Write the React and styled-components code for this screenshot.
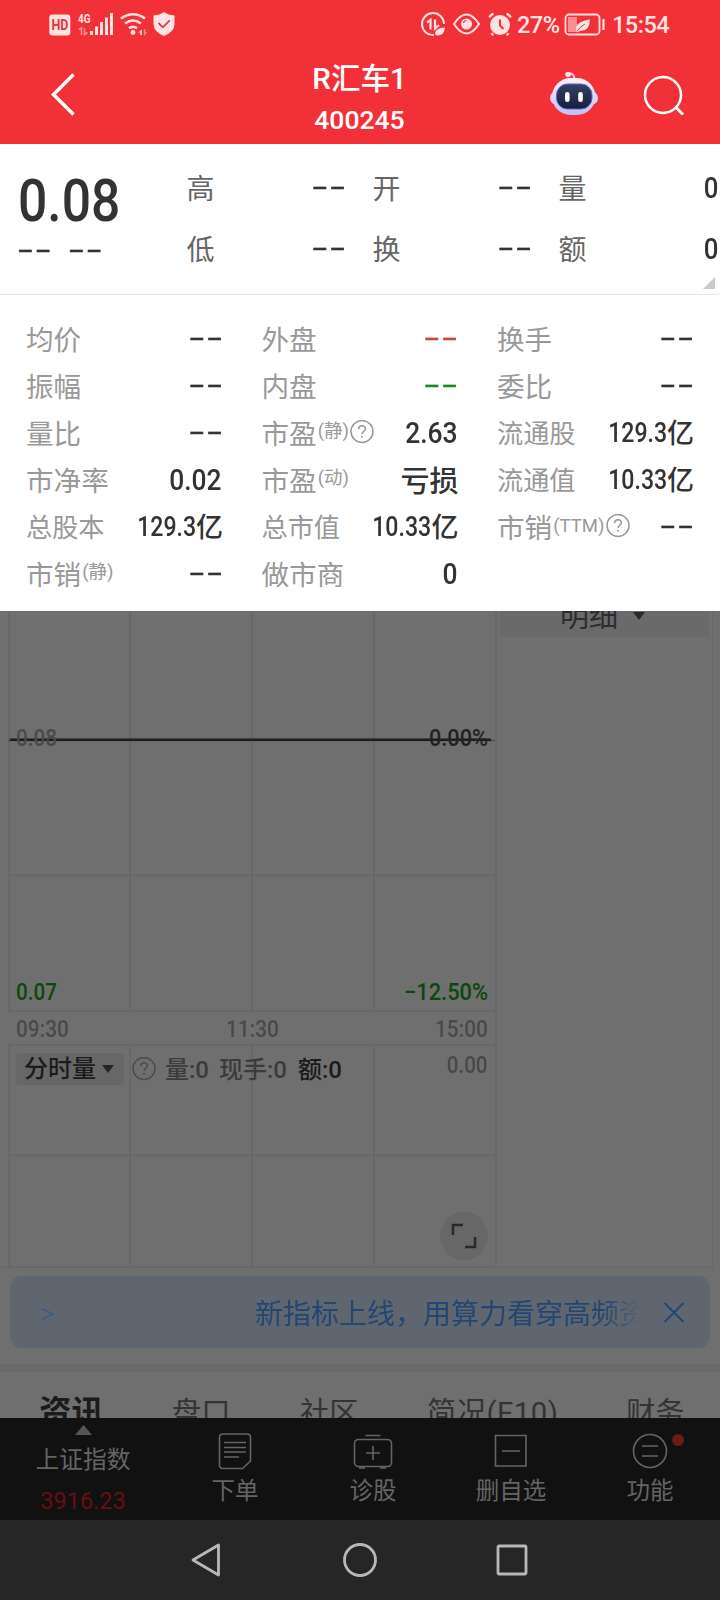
import React from "react";
import styled, { createGlobalStyle } from "styled-components";

const GlobalStyle = createGlobalStyle`
	* {
		box-sizing: border-box;
	}
	body {
		margin: 0;
		background: #6f6f6f;
		font-family: Roboto, "Noto Sans CJK SC", sans-serif;
	}
	svg {
		display: block;
		flex: none;
	}
`;

const Screen = styled.div`
	width: 720px;
	height: 1600px;
	overflow: hidden;
	display: flex;
	flex-direction: column;
	background: #6f6f6f;
`;

const Header = styled.header`
	height: 144px;
	flex: none;
	background: #f23038;
	color: #fff;
`;

const StatusBar = styled.div`
	height: 48px;
	display: flex;
	justify-content: space-between;
	padding: 0 50px 0 49px;
`;

const StatusGroup = styled.div`
	display: flex;
	align-items: center;
	color: #ffe3e3;
`;

const StatusText = styled.span`
	font-size: 23.5px;
	line-height: 48px;
	font-weight: 500;
	width: ${props => props.$width}px;
	margin: 2px 0 0 ${props => props.$gap}px;
	white-space: nowrap;
	letter-spacing: -0.5px;
`;

const TitleBar = styled.div`
	height: 96px;
	display: grid;
	grid-template-columns: 200px 1fr 200px;
`;

const TitleLeft = styled.div`
	padding: 24px 0 0 50px;
`;

const TitleRight = styled.div`
	display: flex;
	padding: 22px 0 0 28px;
	gap: 42px;
`;

const StockTitle = styled.div`
	text-align: center;
	font-weight: 500;
	font-size: 29.5px;
	line-height: 40px;
	padding-top: 11px;
	padding-right: 1px;
`;

const StockCode = styled.div`
	font-size: 26.5px;
	line-height: 42px;
`;

const Summary = styled.section`
	height: 151px;
	flex: none;
	background: #fff;
	border-bottom: 1px solid #e8e8e8;
	display: flex;
	position: relative;
`;

const PriceBox = styled.div`
	width: 187px;
	flex: none;
	padding: 20px 0 0 18px;
`;

const Num = styled.span`
	display: inline-block;
	white-space: nowrap;
	font-size: ${props => props.$size || 29}px;
	font-weight: ${props => props.$weight || 500};
	color: ${props => props.$color || "#333"};
	transform: scaleX(${props => props.$scale || 0.89});
	transform-origin: ${props => props.$origin || "right"} center;
`;

const DashText = styled.span`
	display: inline-block;
	font-family: "DejaVu Sans", sans-serif;
	font-size: 26px;
	line-height: 26px;
	letter-spacing: 0.6px;
	margin: -2px ${props => (props.$origin ? 0 : -1.5)}px 0 0;
	color: ${props => props.$color || "#333"};
	-webkit-text-stroke: 0.4px ${props => props.$color || "#333"};
	transform: scaleX(1.78);
	transform-origin: ${props => props.$origin || "right"} center;
`;

const Price = styled.div`
	height: 72px;
	line-height: 74px;
`;

const ChangeRow = styled.div`
	height: 26px;
	display: flex;
	gap: 31px;
	padding-top: 2px;
	margin-left: -1px;
`;

const SummaryGrid = styled.div`
	flex: 1;
	display: grid;
	grid-template-columns: 159px 159px 160px;
	grid-template-rows: 61px 61px;
	column-gap: 27px;
	padding-top: 12px;
	margin-left: -0.5px;
`;

const SummaryCell = styled.div`
	display: flex;
	justify-content: space-between;
	align-items: center;
	font-size: 28px;
	color: #666;
`;

const SummaryNum = styled(Num)`
	margin-top: 2px;
`;

const Corner = styled.div`
	position: absolute;
	right: 5px;
	bottom: 5px;
	border-left: 12px solid transparent;
	border-bottom: 12px solid #ccc;
`;

const Details = styled.section`
	height: 316px;
	flex: none;
	background: #fff;
	display: grid;
	grid-template-columns: repeat(3, 196px);
	grid-auto-rows: 47px;
	column-gap: 39.5px;
	padding: 19px 0 0 26px;
`;

const DetailCell = styled.div`
	display: flex;
	justify-content: space-between;
	align-items: center;
	white-space: nowrap;
`;

const Label = styled.span`
	display: flex;
	align-items: center;
	font-size: ${props => (props.$compact ? 26.2 : 27.6)}px;
	color: #999;
`;

const Sup = styled.small`
	font-size: 18.5px;
	margin: ${props => (props.$latin ? 1 : -5)}px 1.5px 0 1px;
`;

const Yi = styled.span`
	font-size: ${props => props.$size || 27}px;
	font-weight: 500;
	color: #333;
	margin-right: -1px;
`;

const Value = styled.span`
	display: flex;
	align-items: center;
	justify-content: flex-end;
	width: 0;
	${Num} {
		margin-top: 2px;
	}
`;

const Market = styled.section`
	height: 657px;
	flex: none;
	display: flex;
	width: 713px;
	border-right: 1px solid #686868;
	border-bottom: 1px solid #686868;
`;

const ChartColumn = styled.div`
	width: 497px;
	height: 657px;
	border-right: 2px solid #686868;
	flex: none;
`;

const SideColumn = styled.div`
	flex: 1;
	padding: 0 3px;
`;

const DetailTab = styled.div`
	height: 26px;
	background: #6a6a6a;
	color: #2d2d2d;
	overflow: hidden;
	display: flex;
	align-items: flex-start;
	padding-left: 60px;
	font-size: 29px;
	line-height: 40px;
	span {
		margin-top: -14px;
		width: 73px;
	}
`;

const TimeAxis = styled.div`
	height: 32px;
	line-height: 35px;
	padding: 0 7px 0 16px;
	display: flex;
	justify-content: space-between;
`;

const VolumePanel = styled.div`
	position: relative;
	height: 224px;
`;

const VolumeGrid = styled.svg`
	position: absolute;
	left: 0;
	top: 0;
`;

const VolumeHead = styled.div`
	position: relative;
	display: flex;
	align-items: center;
	padding: 9px 7px 0 16px;
	font-size: 24px;
	color: #3b3b3b;
	white-space: nowrap;
`;

const Picker = styled.div`
	width: 108px;
	height: 32px;
	border-radius: 4px;
	background: #676767;
	color: #1b1b1b;
	font-weight: 500;
	line-height: 32px;
	padding-left: 8px;
	margin-right: 8px;
	display: flex;
	align-items: center;
	gap: 6px;
`;

const VolumeItem = styled.span`
	margin: -3px 0 0 ${props => props.$gap}px;
	width: ${props => props.$width}px;
	color: ${props => props.$color || "#3b3b3b"};
	font-weight: 500;
`;

const VolumeMax = styled.span`
	margin: -9px 0 0 auto;
`;

const ExpandButton = styled.div`
	position: absolute;
	left: 440px;
	top: 168px;
	width: 48px;
	height: 48px;
	border-radius: 50%;
	background: #676767;
`;

const Banner = styled.div`
	height: 72px;
	flex: none;
	margin: 8px 10px 16px;
	border-radius: 12px;
	background: #5f6670;
	color: #234772;
	display: flex;
	align-items: center;
`;

const BannerText = styled.div`
	margin-left: 199px;
	width: 384px;
	overflow: hidden;
	white-space: nowrap;
	font-size: 28px;
	line-height: 66px;
	padding-top: 6px;
	mask-image: linear-gradient(90deg, #000 348px, transparent 386px);
`;

const Tabs = styled.nav`
	height: 54px;
	flex: none;
	overflow: hidden;
	border-top: 8px solid #6a6a6a;
	display: flex;
	padding-left: 39px;
	white-space: nowrap;
`;

const Tab = styled.div`
	width: ${props => props.$width}px;
	flex: none;
	font-size: ${props => (props.$active ? 32.5 : 29.3)}px;
	font-weight: ${props => (props.$active ? 700 : 400)};
	color: ${props => (props.$active ? "#1b1b1b" : "#333")};
	letter-spacing: ${props => props.$spacing || 0}px;
	line-height: 83px;
`;

const ActionBar = styled.div`
	height: 102px;
	flex: none;
	background: #111;
	color: #656565;
	display: grid;
	grid-template-columns: 166px 138px 138px 138px 140px;
`;

const Action = styled.div`
	display: flex;
	flex-direction: column;
	align-items: center;
	position: relative;
	padding-top: 13px;
	font-size: 23.5px;
	line-height: 38px;
	svg {
		margin-bottom: 1px;
	}
`;

const IndexBox = styled.div`
	text-align: center;
	padding-top: 7px;
	font-size: 23.7px;
	line-height: 34px;
	svg {
		margin: 0 auto 8px;
	}
`;

const IndexValue = styled.div`
	color: #650f10;
	font-size: 23.5px;
	line-height: 46px;
	margin-top: 1px;
`;

const RedDot = styled.i`
	position: absolute;
	left: 92px;
	top: 16px;
	width: 12px;
	height: 12px;
	border-radius: 50%;
	background: #6a1a1b;
`;

const SystemNav = styled.div`
	height: 80px;
	flex: none;
	background: #262626;
	display: flex;
	align-items: center;
	padding-left: 190px;
	gap: 120px;
	svg:last-child {
		margin-left: -2px;
	}
`;

function Dash(props) {
	return <DashText $color={props.color} $origin={props.origin}>--</DashText>;
}

function Help(props) {
	return (
		<svg width="24" height="24" viewBox="0 0 24 24" fill="none" stroke={props.color || "#999"} strokeWidth="1.5">
			<circle cx="12" cy="11.5" r="11" />
			<path d="M8.7 9.2c0-4.5 6.8-4.3 6.8-.5 0 2.400-3.400 2.600-3.400 5.300" />
			<path d="M12 15.800v2" />
		</svg>
	);
}

function StatusLeft() {
	return (
		<svg width="128" height="48" viewBox="49 0 128 48" fill="#ffe3e3">
			<rect x="49.300" y="14.500" width="21" height="21" rx="3" />
			<text x="51.500" y="30" fontSize="14" fontWeight="700" fill="#e8323a" textLength="17" lengthAdjust="spacingAndGlyphs">HD</text>
			<text x="78" y="22.500" fontSize="12.500" fontWeight="700" textLength="12.500" lengthAdjust="spacingAndGlyphs">4G</text>
			<path d="M79 29.500l2.500-1.500v7M84.500 28v6.500l3-2" fill="none" stroke="#f89094" strokeWidth="1.600" />
			<path d="M90 31h3v4h-3zM95 26.500h3v8.500h-3zM100 22h3v13h-3zM105 17.500h3v17.500h-3zM110 13h3v22h-3z" />
			<g fill="none" stroke="#ffe3e3" strokeWidth="2.600">
				<path d="M121 18.500q12-8.500 24 0M125 23.500q8-6 16 0M129 28.300q4-3 8 0" />
			</g>
			<circle cx="133" cy="32.500" r="2.400" />
			<path d="M138 32.500l4-3v5.500h-1.800v-2.500z" />
			<path d="M144.500 29v5.500l2-2.500" fill="none" stroke="#f89094" strokeWidth="1.300" />
			<path d="M164 12q4 3 10.500 3.500V24q0 7.500-10.500 12-10.500-4.500-10.500-12v-8.500Q160 15 164 12z" />
			<path d="M158.500 23l4.300 4.300 7-7" fill="none" stroke="#c4454a" strokeWidth="1.800" />
		</svg>
	);
}

function StatusIcons() {
	return (
		<svg width="92" height="48" viewBox="420 0 92 48" fill="none" stroke="#ffe3e3" strokeWidth="2">
			<path d="M434 35A11 11 0 1 1 444 24" />
			<path d="M427 22.500l3.500-2.500v9.500M435 19.500v9l4-3.500" strokeWidth="2.200" />
			<path d="M435 34q0-6 10-6.500-.5 8-8 8zM433.500 36.500l4-3.500" fill="#ffe3e3" stroke="none" />
			<path d="M454 24q12.500-19 25 0-12.500 19-25 0z" />
			<circle cx="466.500" cy="24" r="5.500" fill="#ffe3e3" stroke="none" />
			<path d="M463.500 23q.5-2.500 3-2.500" stroke="#f23038" strokeWidth="1.200" />
			<circle cx="500" cy="25" r="10" fill="#ffe3e3" stroke="none" />
			<path d="M489.500 17.500q1-3 4-3.500M506.500 14q3 .5 4 3.500M493 33.500l-1.500 1.500M507 33.500l1.500 1.500" strokeWidth="2.600" />
			<path d="M500 19.500v6l3.500 3.500" stroke="#f23038" />
		</svg>
	);
}

function Battery() {
	return (
		<svg width="44" height="48" viewBox="563 0 44 48" fill="none" stroke="#ffe3e3">
			<rect x="565.500" y="14.500" width="34" height="20" rx="3.500" strokeWidth="1.800" />
			<rect x="568" y="17" width="9" height="15" fill="#f88f94" stroke="none" />
			<path d="M576 30.500q-1-9 14-11-.5 12-10 11.500l-3 1.500z" fill="#ffe3e3" stroke="none" />
			<path d="M577 31.500q3-5 8-7.500" stroke="#f23038" strokeWidth="1" />
			<path d="M603.500 19v11" strokeWidth="2.200" />
		</svg>
	);
}

function Robot() {
	return (
		<svg width="50" height="52" viewBox="0 4 50 52">
			<defs>
				<linearGradient id="shell" x1="0" y1="0" x2="0" y2="1">
					<stop offset="0" stopColor="#fff0f7" />
					<stop offset="1" stopColor="#c4bdf6" />
				</linearGradient>
				<linearGradient id="visor" x1="0" y1="0" x2="0" y2="1">
					<stop offset="0" stopColor="#36405f" />
					<stop offset="1" stopColor="#161e40" />
				</linearGradient>
			</defs>
			<path d="M20 8q6-1.500 6.500 5" fill="none" stroke="#f9c6d5" strokeWidth="2.200" />
			<circle cx="20" cy="8.500" r="2.700" fill="#ffe0e9" />
			<rect x="2" y="25" width="48" height="14" rx="7" fill="#d6d6fb" />
			<rect x="4" y="12" width="43.500" height="37" rx="18.500" fill="url(#shell)" />
			<rect x="8.500" y="18" width="35.500" height="25" rx="11" fill="url(#visor)" stroke="#5867c9" strokeWidth="1" />
			<rect x="17" y="26" width="4.600" height="10" rx="2.300" fill="#fff" />
			<rect x="30.200" y="26" width="4.600" height="10" rx="2.300" fill="#fff" />
		</svg>
	);
}

const summary = [
	["高", "--"],
	["开", "--"],
	["量", "0"],
	["低", "--"],
	["换", "--"],
	["额", "0"],
];

const details = [
	{ label: "均价" },
	{ label: "外盘", color: "#c94542" },
	{ label: "换手" },
	{ label: "振幅" },
	{ label: "内盘", color: "#1b8a1b" },
	{ label: "委比" },
	{ label: "量比" },
	{ label: "市盈", sup: "(静)", help: true, value: "2.63" },
	{ label: "流通股", value: "129.3", yi: true },
	{ label: "市净率", value: "0.02" },
	{ label: "市盈", sup: "(动)", text: "亏损" },
	{ label: "流通值", value: "10.33", yi: true },
	{ label: "总股本", value: "129.3", yi: true },
	{ label: "总市值", value: "10.33", yi: true },
	{ label: "市销", sup: "(TTM)", help: true },
	{ label: "市销", sup: "(静)" },
	{ label: "做市商", value: "0" },
];

function DetailValue({ item }) {
	if (item.text) return <Value><Yi $size={29}>{item.text}</Yi></Value>;
	if (!item.value) return <Value><Dash color={item.color} /></Value>;
	return (
		<Value>
			<Num $size={item.yi ? 27.5 : 29} $scale={item.yi ? 0.84 : 0.91}>{item.value}</Num>
			{item.yi && <Yi>亿</Yi>}
		</Value>
	);
}

function PriceChart() {
	return (
		<svg width="495" height="401" viewBox="0 611 495 401" fill="#333" fontSize="23.500">
			<path d="M9 611v401M130 611v401M252 611v401M374 611v401M8 875.500h487M8 1011h487" stroke="#686868" strokeWidth="2" />
			<path d="M8 740.500h487" stroke="#4d4d4d" strokeWidth="1.500" />
			<path d="M10 739.700h481" stroke="#1d1d1d" strokeWidth="2.500" />
			<g fontWeight="500">
				<text x="16" y="746" fill="#4a4a4a" textLength="41" lengthAdjust="spacingAndGlyphs">0.08</text>
				<text x="429" y="746" fill="#222" textLength="59" lengthAdjust="spacingAndGlyphs">0.00%</text>
				<text x="16" y="1000" fill="#0b480b" textLength="41" lengthAdjust="spacingAndGlyphs">0.07</text>
				<text x="404" y="1000" fill="#0b480b" textLength="84" lengthAdjust="spacingAndGlyphs">−12.50%</text>
			</g>
		</svg>
	);
}

function App() {
	return (
		<Screen>
			<GlobalStyle />
			<Header>
				<StatusBar>
					<StatusLeft />
					<StatusGroup>
						<StatusIcons />
						<StatusText $width={46} $gap={5}>27%</StatusText>
						<Battery />
						<StatusText $width={58} $gap={5}>15:54</StatusText>
					</StatusGroup>
				</StatusBar>
				<TitleBar>
					<TitleLeft>
						<svg width="28" height="46" viewBox="0 0 28 46" fill="none" stroke="#fff" strokeWidth="3.500">
							<path d="M23.500 2.500L3.500 22.500l20 20" />
						</svg>
					</TitleLeft>
					<StockTitle>
						R汇车1
						<StockCode>400245</StockCode>
					</StockTitle>
					<TitleRight>
						<Robot />
						<svg width="44" height="52" viewBox="0 0 44 52" fill="none" stroke="#fff" strokeWidth="2.500">
							<circle cx="23" cy="25" r="18" />
							<path d="M35.500 37l7.500 7.500" strokeWidth="3" />
						</svg>
					</TitleRight>
				</TitleBar>
			</Header>

			<Summary>
				<PriceBox>
					<Price><Num $size={60} $scale={0.86} $origin="left">0.08</Num></Price>
					<ChangeRow>
						<Dash origin="left" />
						<Dash origin="left" />
					</ChangeRow>
				</PriceBox>
				<SummaryGrid>
					{summary.map(([label, value]) => (
						<SummaryCell key={label}>
							{label}
							{value === "--" ? <Dash /> : <SummaryNum>{value}</SummaryNum>}
						</SummaryCell>
					))}
				</SummaryGrid>
				<Corner />
			</Summary>

			<Details>
				{details.map((item, i) => (
					<DetailCell key={i}>
						<Label $compact={item.yi}>
							{item.label}
							{item.sup && <Sup $latin={item.sup === "(TTM)"}>{item.sup}</Sup>}
							{item.help && <Help />}
						</Label>
						<DetailValue item={item} />
					</DetailCell>
				))}
			</Details>

			<Market>
				<ChartColumn>
					<PriceChart />
					<TimeAxis>
						<Num $size={24} $scale={0.87} $color="#4a4a4a" $origin="left">09:30</Num>
						<Num $size={24} $scale={0.87} $color="#4a4a4a" $origin="center">11:30</Num>
						<Num $size={24} $scale={0.87} $color="#4a4a4a">15:00</Num>
					</TimeAxis>
					<VolumePanel>
						<VolumeGrid width="495" height="224" viewBox="0 1044 495 224">
							<path d="M9 1044v224M130 1044v224M252 1044v224M374 1044v224M8 1045h487M8 1155.500h487M8 1267h487" stroke="#686868" strokeWidth="2" />
						</VolumeGrid>
						<VolumeHead>
							<Picker>
								分时量
								<svg width="12" height="8" viewBox="0 0 12 8"><path d="M0 0h12L6 8z" fill="#242424" /></svg>
							</Picker>
							<Help color="#4d4d4d" />
							<VolumeItem $gap={9} $width={44}>量:0</VolumeItem>
							<VolumeItem $gap={10} $width={69}>现手:0</VolumeItem>
							<VolumeItem $gap={10} $width={46} $color="#1b1b1b">额:0</VolumeItem>
							<VolumeMax><Num $size={24} $scale={0.86} $color="#484848">0.00</Num></VolumeMax>
						</VolumeHead>
						<ExpandButton>
							<svg width="48" height="48" viewBox="0 0 48 48" fill="none" stroke="#292929" strokeWidth="2.500">
								<path d="M13 23V13h10M25 35h10V25" />
							</svg>
						</ExpandButton>
					</VolumePanel>
				</ChartColumn>
				<SideColumn>
					<DetailTab>
						<span>明细</span>
						<svg width="12" height="10" viewBox="0 0 12 10"><path d="M0 1h12L6 9z" fill="#2b2b2b" /></svg>
					</DetailTab>
				</SideColumn>
			</Market>

			<Banner>
				<svg width="46" height="72" viewBox="0 0 46 72" fill="none" stroke="#3c5b82" strokeWidth="1.500">
					<path d="M32 33l11 5-11 5" />
				</svg>
				<BannerText>新指标上线，用算力看穿高频资</BannerText>
				<svg width="50" height="72" viewBox="0 0 50 72" fill="none" stroke="#234772" strokeWidth="2">
					<path d="M25.500 27l19 19M44.500 27l-19 19" />
				</svg>
			</Banner>

			<Tabs>
				<Tab $active $width={133}>资讯</Tab>
				<Tab $width={128}>盘口</Tab>
				<Tab $width={127}>社区</Tab>
				<Tab $width={199} $spacing={0.5}>简况(F10)</Tab>
				<Tab $width={80}>财务</Tab>
			</Tabs>

			<ActionBar>
				<IndexBox>
					<svg width="17" height="10" viewBox="0 0 17 10"><path d="M8.500 0L17 10H0z" fill="#555" /></svg>
					上证指数
					<IndexValue>3916.23</IndexValue>
				</IndexBox>
				<Action>
					<svg width="40" height="40" viewBox="0 0 40 40" fill="none" stroke="#656565" strokeWidth="1.600">
						<path d="M8 3h24q3.500 0 3.500 3.500V30l-8 7.500H8q-3.500 0-3.500-3.500V6.500Q4.500 3 8 3z" />
						<path d="M9 11.500h22M9 16.500h22M9 21h22M9 26h15" />
					</svg>
					下单
				</Action>
				<Action>
					<svg width="40" height="40" viewBox="0 0 40 40" fill="none" stroke="#656565" strokeWidth="1.600">
						<rect x="1.500" y="8.500" width="37" height="27" rx="4" />
						<path d="M12.500 4.500h15M20 15v14M13 22h14M6 37h6M27 37h6" />
					</svg>
					诊股
				</Action>
				<Action>
					<svg width="40" height="40" viewBox="0 0 40 40" fill="none" stroke="#656565" strokeWidth="1.600">
						<path d="M4.500 4.500h30.500v30.500H4.500zM11 20h18" />
					</svg>
					删自选
				</Action>
				<Action>
					<svg width="40" height="40" viewBox="0 0 40 40" fill="none" stroke="#656565" strokeWidth="1.600">
						<circle cx="20" cy="20" r="16.500" />
						<path d="M12 15h16M12 25h16" />
					</svg>
					功能
					<RedDot />
				</Action>
			</ActionBar>

			<SystemNav>
				<svg width="32" height="36" viewBox="0 0 32 36" fill="none" stroke="#b8b8b8" strokeWidth="2.800" strokeLinejoin="round">
					<path d="M28.500 3v30L3 18z" />
				</svg>
				<svg width="36" height="36" viewBox="0 0 36 36" fill="none" stroke="#b8b8b8" strokeWidth="2.800">
					<circle cx="18" cy="18" r="15.500" />
				</svg>
				<svg width="32" height="32" viewBox="0 0 32 32" fill="none" stroke="#b8b8b8" strokeWidth="2.800">
					<rect x="2" y="2" width="28" height="28" rx="1" />
				</svg>
			</SystemNav>
		</Screen>
	);
}

export default App;
